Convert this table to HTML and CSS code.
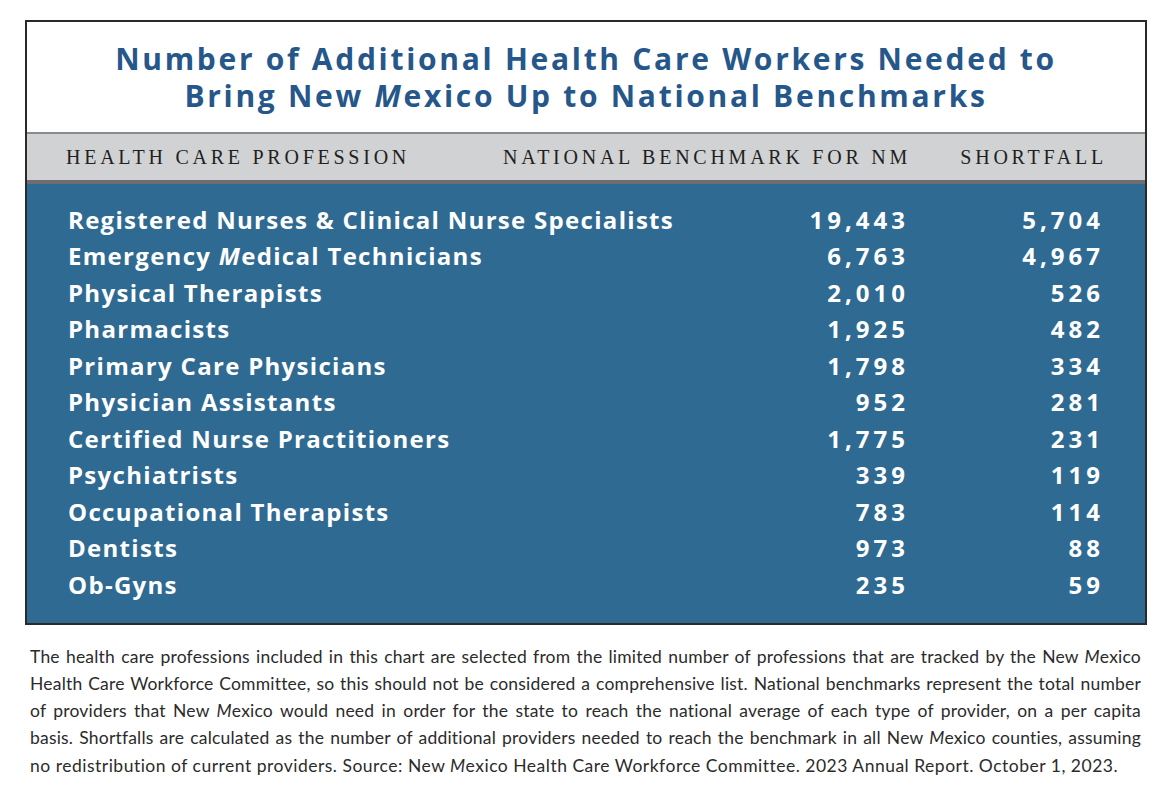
FILE: index.html
```html
<!DOCTYPE html>
<html lang="en">
<head>
<meta charset="utf-8">
<title>Additional Health Care Workers Needed</title>
<link rel="stylesheet" href="styles.css">
</head>
<body>
<div class="chart">
  <h1 class="title">Number of Additional Health Care Workers Needed to<br>Bring New <i>M</i>exico Up to National Benchmarks</h1>
  <div class="head">
    <span class="c-name">HEALTH CARE PROFESSION</span>
    <span class="c-num">NATIONAL BENCHMARK FOR NM</span>
    <span class="c-num">SHORTFALL</span>
  </div>
  <div class="body">
    <div class="row"><span class="c-name">Registered Nurses &amp; Clinical Nurse Specialists</span><span class="c-num">19,443</span><span class="c-num">5,704</span></div>
    <div class="row"><span class="c-name">Emergency <i>M</i>edical Technicians</span><span class="c-num">6,763</span><span class="c-num">4,967</span></div>
    <div class="row"><span class="c-name">Physical Therapists</span><span class="c-num">2,010</span><span class="c-num">526</span></div>
    <div class="row"><span class="c-name">Pharmacists</span><span class="c-num">1,925</span><span class="c-num">482</span></div>
    <div class="row"><span class="c-name">Primary Care Physicians</span><span class="c-num">1,798</span><span class="c-num">334</span></div>
    <div class="row"><span class="c-name">Physician Assistants</span><span class="c-num">952</span><span class="c-num">281</span></div>
    <div class="row"><span class="c-name">Certified Nurse Practitioners</span><span class="c-num">1,775</span><span class="c-num">231</span></div>
    <div class="row"><span class="c-name">Psychiatrists</span><span class="c-num">339</span><span class="c-num">119</span></div>
    <div class="row"><span class="c-name">Occupational Therapists</span><span class="c-num">783</span><span class="c-num">114</span></div>
    <div class="row"><span class="c-name">Dentists</span><span class="c-num">973</span><span class="c-num">88</span></div>
    <div class="row"><span class="c-name">Ob-Gyns</span><span class="c-num">235</span><span class="c-num">59</span></div>
  </div>
</div>
<div class="note">
  <span class="ln">The health care professions included in this chart are selected from the limited number of professions that are tracked by the New <i>M</i>exico</span>
  <span class="ln">Health Care Workforce Committee, so this should not be considered a comprehensive list. National benchmarks represent the total number</span>
  <span class="ln">of providers that New <i>M</i>exico would need in order for the state to reach the national average of each type of provider, on a per capita</span>
  <span class="ln">basis. Shortfalls are calculated as the number of additional providers needed to reach the benchmark in all New <i>M</i>exico counties, assuming</span>
  <span class="ln last">no redistribution of current providers. Source: New <i>M</i>exico Health Care Workforce Committee. 2023 Annual Report. October 1, 2023.</span>
</div>
</body>
</html>
```

FILE: styles.css
```css
html, body {
  margin: 0;
  padding: 0;
  background: #ffffff;
}
body {
  padding: 20px 29px 0 25px;
  font-family: "Open Sans", "Noto Sans", sans-serif;
}
.chart {
  border: 2px solid #2a2a2a;
  background: #ffffff;
}
.title {
  margin: 0;
  height: 110px;
  box-sizing: border-box;
  padding-top: 18px;
  text-align: center;
  color: #25578a;
  font-size: 30px;
  line-height: 37px;
  font-weight: 700;
  letter-spacing: 2.7px;
}
.title i,
.row i,
.note i {
  font-style: italic;
}
.head {
  display: grid;
  grid-template-columns: 1fr 420px 196px;
  align-items: center;
  height: 46px;
  padding: 0 38px 0 39px;
  background: #d1d2d4;
  border-top: 2px solid #8a8b8d;
  border-bottom: 4px solid #6d6e70;
  font-family: "Liberation Serif", serif;
  font-size: 20px;
  letter-spacing: 3.75px;
  color: #231f20;
  white-space: nowrap;
}
.c-num {
  text-align: right;
}
.body {
  background: #2f6a92;
  padding: 17px 41px 20px 41px;
}
.row {
  display: grid;
  grid-template-columns: 1fr 200px 195px;
  height: 36.5px;
  align-items: center;
  color: #ffffff;
  font-weight: 700;
  font-size: 24px;
  letter-spacing: 1.3px;
  white-space: nowrap;
}
.row .c-num {
  letter-spacing: 4px;
}
.note {
  margin: 18px 6px 0 5px;
  font-family: "Lato", "Open Sans", sans-serif;
  font-size: 17.5px;
  line-height: 27.3px;
  color: #2b2b2b;
  letter-spacing: 0.2px;
}
.ln {
  display: block;
  white-space: nowrap;
  text-align: justify;
  text-align-last: justify;
}
.ln.last {
  text-align-last: left;
  letter-spacing: 0.5px;
}
```
